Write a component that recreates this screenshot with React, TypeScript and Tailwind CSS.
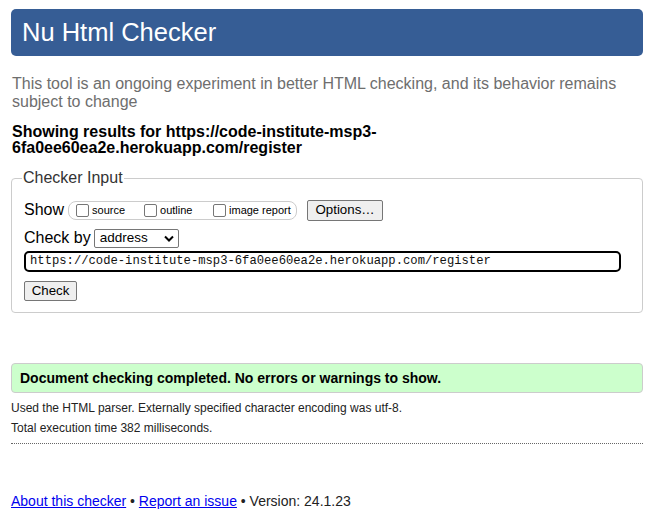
import React from "react";

const Box = () => (
  <span className="inline-block w-[13px] h-[13px] border border-[#767676] rounded-[2px] bg-white mr-[3px] align-[-2px]" />
);

export default function App() {
  return (
    <div className="min-h-[526px] bg-white pl-[11px] pr-[10px] pt-[9px] font-['Liberation_Sans',Arial,sans-serif] text-black">
      <header className="h-[47px] bg-[#365d95] rounded-[5px] flex items-center pl-[11px]">
        <h1 className="text-white text-[25.5px] leading-none">Nu Html Checker</h1>
      </header>

      <p className="mt-[19px] text-[16px] leading-[18px] text-[#6e6e6e] pl-[1px]">
        This tool is an ongoing experiment in better HTML checking, and its behavior remains
        subject to change
      </p>

      <p className="mt-[13px] text-[16px] leading-[16px] font-bold pl-[1px] w-[380px]">
        Showing results for https://code-institute-msp3-6fa0ee60ea2e.herokuapp.com/register
      </p>

      <fieldset className="mt-[13px] border border-[#cccccc] rounded-[4px] px-[12px] pb-[11px] pt-[0px]">
        <legend className="text-[16px] leading-[18px] px-[1px] ml-[-2px] text-[#333]">Checker Input</legend>

        <div className="flex items-center mt-[12px] h-[22px]">
          <span className="text-[16px] mr-[4px]">Show</span>
          <span className="flex items-center h-[19px] w-[229px] border border-[#cccccc] rounded-[8px] pl-[7px] text-[11px]">
            <label className="flex items-center w-[68px]">
              <Box />
              source
            </label>
            <label className="flex items-center w-[69px]">
              <Box />
              outline
            </label>
            <label className="flex items-center">
              <Box />
              image report
            </label>
          </span>
          <button className="ml-[10px] h-[21px] w-[76px] bg-[#efefef] border border-[#767676] rounded-[2px] text-[13.3px] leading-none">
            Options…
          </button>
        </div>

        <div className="flex items-center mt-[7px] h-[20px]">
          <span className="text-[16px] mr-[3px]">Check by</span>
          <span className="flex items-center justify-between h-[19px] w-[85px] border border-[#767676] rounded-[2px] pl-[5px] pr-[4px] text-[13.5px]">
            address
            <svg width="10" height="7" viewBox="0 0 10 7">
              <path d="M1 1.5 L5 5.5 L9 1.5" stroke="#000" strokeWidth="2" fill="none" />
            </svg>
          </span>
        </div>

        <div className="mt-[3px] h-[21px] w-[597px] border-2 border-black rounded-[5px] flex items-center pl-[4px] font-['Liberation_Mono',monospace] text-[12.2px] text-[#111]">
          https://code-institute-msp3-6fa0ee60ea2e.herokuapp.com/register
        </div>

        <button className="mt-[9px] h-[20px] w-[53px] bg-[#efefef] border border-[#767676] rounded-[2px] text-[13.3px] leading-none block">
          Check
        </button>
      </fieldset>

      <div className="mt-[50px] h-[30px] bg-[#ccffcc] border border-[#cccccc] rounded-[4px] flex items-center pl-[8px]">
        <p className="font-bold text-[14px]">Document checking completed. No errors or warnings to show.</p>
      </div>

      <p className="mt-[7px] text-[12px] leading-[16px] text-[#222]">
        Used the HTML parser. Externally specified character encoding was utf-8.
      </p>
      <p className="mt-[4px] text-[12px] leading-[16px] text-[#222]">Total execution time 382 milliseconds.</p>

      <div className="mt-[7px] border-t border-dotted border-[#666]" />

      <p className="mt-[49px] text-[14px] leading-[16px] text-[#222]">
        <a className="text-[#0000ee] underline">About this checker</a> •{" "}
        <a className="text-[#0000ee] underline">Report an issue</a> • Version: 24.1.23
      </p>
    </div>
  );
}
